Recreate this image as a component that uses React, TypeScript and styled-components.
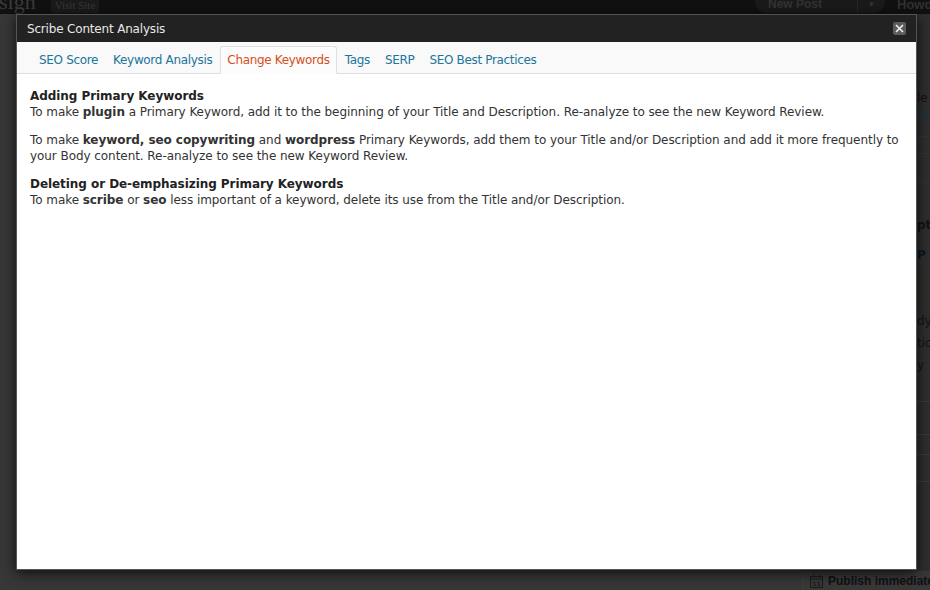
import React from 'react';
import styled, { createGlobalStyle } from 'styled-components';

const GlobalStyle = createGlobalStyle`
  html, body {
    margin: 0;
    padding: 0;
  }
  body {
    width: 930px;
    height: 590px;
    overflow: hidden;
    background: #363636;
    font-family: "DejaVu Sans", Verdana, sans-serif;
  }
`;

const Page = styled.div`
  position: relative;
  width: 930px;
  height: 590px;
  overflow: hidden;
  display: flex;
  flex-direction: column;
`;

/* ---------- dimmed admin page behind the dialog ---------- */

const AdminBar = styled.header`
  height: 14px;
  flex-shrink: 0;
  display: flex;
  align-items: flex-start;
  background: #111;
  overflow: hidden;
`;

const SiteTitle = styled.div`
  margin: -9px 0 0 -1px;
  font-family: "Liberation Serif", serif;
  font-size: 22px;
  line-height: 22px;
  color: #3b3b3b;
`;

const VisitButton = styled.div`
  margin-left: 15px;
  height: 13px;
  padding: 0 4px;
  background: #1b1b1b;
  border-radius: 0 0 2px 2px;
  font-family: "Liberation Serif", serif;
  font-size: 11px;
  line-height: 11px;
  color: #383838;
`;

const BarSpacer = styled.div`
  flex: 1;
`;

const NewPost = styled.div`
  display: flex;
  width: 130px;
  height: 13px;
  background: #1a1a1a;
  border-radius: 0 0 12px 12px;
  font-family: "Liberation Sans", Arial, sans-serif;
  font-size: 12px;
  font-weight: bold;
  line-height: 9px;
  color: #333;
`;

const NewPostLabel = styled.span`
  flex: 1;
  padding-left: 13px;
  border-right: 1px solid #262626;
`;

const NewPostArrow = styled.span`
  width: 27px;
  text-align: center;
  font-size: 8px;
  line-height: 10px;
`;

const Howdy = styled.div`
  margin: 0 0 0 12px;
  width: 33px;
  font-family: "Liberation Sans", Arial, sans-serif;
  font-size: 13px;
  font-weight: bold;
  line-height: 9px;
  color: #313131;
  overflow: hidden;
`;

const Body = styled.div`
  flex: 1;
  display: flex;
`;

const Main = styled.div`
  flex: 1;
  background: #373737;
`;

const Sidebar = styled.aside`
  width: 127px;
  flex-shrink: 0;
  display: flex;
  flex-direction: column;
  background: #2e2e2e;
  border-left: 1px solid #3c3c3c;
  font-family: "DejaVu Sans", sans-serif;
  font-size: 12px;
  color: #121212;
  overflow: hidden;
`;

const SideRow = styled.div<{ $h: number; $line?: string; $color?: string; $bold?: boolean; $link?: boolean }>`
  height: ${(p) => p.$h}px;
  flex-shrink: 0;
  padding-left: 114px;
  line-height: ${(p) => p.$h}px;
  white-space: nowrap;
  color: ${(p) => p.$color || '#121212'};
  font-weight: ${(p) => (p.$bold ? 'bold' : 'normal')};
  text-decoration: ${(p) => (p.$link ? 'underline' : 'none')};
  border-bottom: ${(p) => (p.$line ? `1px solid ${p.$line}` : 'none')};
`;

const PublishRow = styled.div`
  margin-top: auto;
  height: 19px;
  flex-shrink: 0;
  display: flex;
  align-items: center;
  gap: 5px;
  padding-left: 7px;
  background: #383838;
  font-family: "Liberation Sans", Arial, sans-serif;
  font-size: 12px;
  font-weight: bold;
  color: #111;
  white-space: nowrap;

  svg {
    flex-shrink: 0;
  }
`;

/* ---------- dialog ---------- */

const Dialog = styled.div`
  position: absolute;
  left: 16px;
  top: 14px;
  width: 899px;
  height: 554px;
  display: flex;
  flex-direction: column;
  background: #fff;
  border: 1px solid #555;
  box-shadow: 0 3px 12px rgba(0, 0, 0, 0.75);
`;

const TitleBar = styled.div`
  height: 27px;
  flex-shrink: 0;
  display: flex;
  align-items: center;
  justify-content: space-between;
  padding: 0 10px 0 10px;
  background: #222;
`;

const Title = styled.h1`
  margin: 0;
  font-size: 12px;
  font-weight: normal;
  letter-spacing: -0.18px;
  color: #e8e8e8;
`;

const CloseButton = styled.button`
  width: 13px;
  height: 13px;
  padding: 0;
  display: flex;
  align-items: center;
  justify-content: center;
  background: #5c5c5c;
  border: none;
  border-radius: 2px;
  cursor: pointer;
`;

const TabBar = styled.nav`
  height: 32px;
  flex-shrink: 0;
  box-sizing: border-box;
  display: flex;
  align-items: flex-end;
  gap: 1px;
  padding-left: 15px;
  background: #f9f9f9;
  border-bottom: 1px solid #dfdfdf;
`;

const Tab = styled.a<{ $active?: boolean }>`
  height: 28px;
  box-sizing: border-box;
  padding: 0 6px;
  margin-bottom: -1px;
  font-size: 12px;
  line-height: 26px;
  letter-spacing: -0.33px;
  text-decoration: none;
  cursor: pointer;
  color: ${(p) => (p.$active ? '#d54e21' : '#21759b')};
  background: ${(p) => (p.$active ? '#fcfcfc' : 'transparent')};
  border: 1px solid ${(p) => (p.$active ? '#dfdfdf' : 'transparent')};
  border-bottom-color: ${(p) => (p.$active ? '#fcfcfc' : 'transparent')};
  border-radius: 3px 3px 0 0;
`;

const Content = styled.div`
  flex: 1;
  padding: 14px 10px 0 13px;
  font-size: 12px;
  line-height: 16px;
  letter-spacing: -0.06px;
  color: #333;
`;

const Para = styled.p`
  margin: 0 0 12px;
`;

const Heading = styled.strong`
  display: block;
  color: #222;
`;

const tabs = ['SEO Score', 'Keyword Analysis', 'Change Keywords', 'Tags', 'SERP', 'SEO Best Practices'];

const CalendarIcon = () => (
  <svg width="13" height="14" viewBox="0 0 13 14">
    <rect x="0.5" y="2.5" width="12" height="11" fill="none" stroke="#1a1a1a" />
    <line x1="0.5" y1="5" x2="12.5" y2="5" stroke="#1a1a1a" />
    <line x1="3.5" y1="0.5" x2="3.5" y2="3.5" stroke="#1a1a1a" />
    <line x1="9.5" y1="0.5" x2="9.5" y2="3.5" stroke="#1a1a1a" />
    <text x="6.5" y="12" fontSize="6" textAnchor="middle" fill="#1a1a1a" fontFamily="DejaVu Sans, sans-serif">11</text>
  </svg>
);

export default function App() {
  return (
    <Page>
      <GlobalStyle />
      <AdminBar>
        <SiteTitle>sign</SiteTitle>
        <VisitButton>Visit Site</VisitButton>
        <BarSpacer />
        <NewPost>
          <NewPostLabel>New Post</NewPostLabel>
          <NewPostArrow>▼</NewPostArrow>
        </NewPost>
        <Howdy>Howdy</Howdy>
      </AdminBar>
      <Body>
        <Main />
        <Sidebar>
          <SideRow $h={77} />
          <SideRow $h={15}>le</SideRow>
          <SideRow $h={15} $color="#1a3446" $link>en</SideRow>
          <SideRow $h={15} $line="#36361f" />
          <SideRow $h={16} $line="#36361f" />
          <SideRow $h={28} $line="#333" />
          <SideRow $h={30} />
          <SideRow $h={24} $bold>pt</SideRow>
          <SideRow $h={7} />
          <SideRow $h={22} $color="#0d1524" $bold>P</SideRow>
          <SideRow $h={22} $color="#1f3a16">s</SideRow>
          <SideRow $h={22} $color="#1f3a16">s</SideRow>
          <SideRow $h={22}>dy</SideRow>
          <SideRow $h={22}>tic</SideRow>
          <SideRow $h={22}>y</SideRow>
          <SideRow $h={25} $line="#3a3a3a" />
          <SideRow $h={32} $line="#3a3a3a" />
          <SideRow $h={19} $line="#3a3a3a" />
          <SideRow $h={26} $line="#3a3a3a" />
          <PublishRow>
            <CalendarIcon />
            Publish immediately
          </PublishRow>
        </Sidebar>
      </Body>

      <Dialog role="dialog" aria-label="Scribe Content Analysis">
        <TitleBar>
          <Title>Scribe Content Analysis</Title>
          <CloseButton aria-label="Close">
            <svg width="9" height="9" viewBox="0 0 9 9">
              <path d="M1 1L8 8M8 1L1 8" stroke="#f2f2f2" strokeWidth="1.6" />
            </svg>
          </CloseButton>
        </TitleBar>
        <TabBar>
          {tabs.map((t) => (
            <Tab key={t} $active={t === 'Change Keywords'}>
              {t}
            </Tab>
          ))}
        </TabBar>
        <Content>
          <Para>
            <Heading>Adding Primary Keywords</Heading>
            To make <b>plugin</b> a Primary Keyword, add it to the beginning of your Title and Description.
            Re-analyze to see the new Keyword Review.
          </Para>
          <Para>
            To make <b>keyword, seo copywriting</b> and <b>wordpress</b> Primary Keywords, add them to your Title
            and/or Description and add it more frequently to your Body content. Re-analyze to see the new Keyword
            Review.
          </Para>
          <Para>
            <Heading>Deleting or De-emphasizing Primary Keywords</Heading>
            To make <b>scribe</b> or <b>seo</b> less important of a keyword, delete its use from the Title and/or
            Description.
          </Para>
        </Content>
      </Dialog>
    </Page>
  );
}
